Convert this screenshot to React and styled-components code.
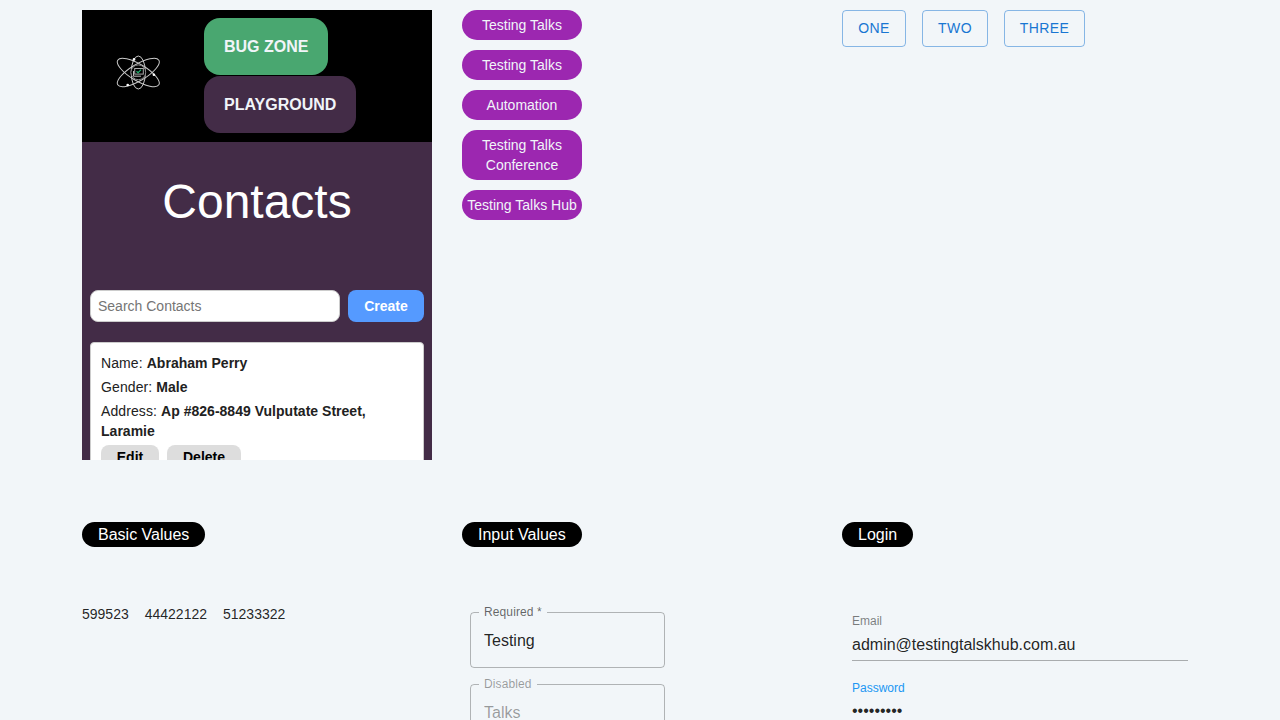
import React from "react";
import styled, { createGlobalStyle } from "styled-components";

const GlobalStyle = createGlobalStyle`
  *, *::before, *::after { box-sizing: border-box; }
  html, body { margin: 0; height: 100%; overflow: hidden; }
  body {
    background: #f2f6f9;
    color: rgba(0, 0, 0, 0.87);
    font-family: "Liberation Sans", Arial, sans-serif;
    font-size: 16px;
  }
  input, button { font-family: inherit; margin: 0; }
`;

const Page = styled.main`
  height: 720px;
  overflow: hidden;
  padding: 10px 0 0 82px;
`;

const Row = styled.section`
  display: grid;
  grid-template-columns: 380px 380px 350px;
  align-items: start;
  height: ${(p) => p.$height}px;
`;

const Phone = styled.div`
  width: 350px;
  height: 450px;
  overflow: hidden;
  background: #432c47;
`;

const PhoneHeader = styled.header`
  display: flex;
  height: 132px;
  padding-top: 8px;
  background: #000;
`;

const LogoBox = styled.div`
  width: 122px;
  padding: 36px 0 0 34px;
  svg { display: block; }
`;

const Nav = styled.nav`
  display: flex;
  flex-direction: column;
  align-items: flex-start;
  gap: 1px;
`;

const NavButton = styled.a`
  height: 57px;
  padding: 0 20px;
  border-radius: 16px;
  background: ${(p) => p.$color};
  color: #f1f5f9;
  font-weight: 700;
  line-height: 57px;
`;

const Title = styled.h1`
  margin: 0;
  height: 148px;
  padding-top: 32px;
  color: #fff;
  font-size: 48px;
  font-weight: 400;
  line-height: 56px;
  text-align: center;
`;

const SearchRow = styled.div`
  display: flex;
  gap: 8px;
  padding: 0 8px;
  margin-bottom: 20px;
`;

const SearchInput = styled.input`
  width: 250px;
  height: 32px;
  padding: 0 7px;
  border: 1px solid #ccc;
  border-radius: 8px;
  background: #fff;
  font-size: 14px;
  outline: none;
  &::placeholder { color: #757575; }
`;

const CreateButton = styled.button`
  width: 76px;
  height: 32px;
  padding: 0;
  border: 0;
  border-radius: 8px;
  background: #559aff;
  color: #fff;
  font-size: 14px;
  font-weight: 700;
`;

const Card = styled.article`
  height: 180px;
  margin: 0 8px;
  padding: 10px;
  border: 1px solid #ccc;
  border-radius: 4px;
  background: #fff;
`;

const Detail = styled.p`
  margin: 0 0 4px;
  color: #212121;
  font-size: 14px;
  line-height: 20px;
  letter-spacing: 0.1px;
  b { letter-spacing: 0.02px; }
`;

const CardActions = styled.div`
  display: flex;
  gap: 8px;
`;

const CardButton = styled.button`
  width: ${(p) => p.$width}px;
  height: 24px;
  padding: 0;
  border: 0;
  border-radius: 8px;
  background: #ddd;
  color: #000;
  font-size: 14px;
  font-weight: 700;
`;

const TagList = styled.div`
  display: flex;
  flex-direction: column;
  gap: 10px;
  width: 120px;
`;

const Tag = styled.span`
  padding: 5px 0;
  border-radius: 15px;
  background: #9c27b0;
  color: #f1f5f9;
  font-size: 14px;
  line-height: 20px;
  text-align: center;
`;

const ButtonGroup = styled.div`
  display: flex;
  gap: 16px;
`;

const OutlinedButton = styled.button`
  width: ${(p) => p.$width}px;
  height: 37px;
  padding: 0 0 2px;
  border: 1px solid rgba(25, 118, 210, 0.5);
  border-radius: 4px;
  background: transparent;
  color: #1976d2;
  font-size: 14px;
  letter-spacing: 0.4px;
`;

const Badge = styled.h2`
  width: fit-content;
  height: 25px;
  margin: 0;
  padding: 0 16px;
  border-radius: 13px;
  background: #000;
  color: #fff;
  font-size: 16px;
  font-weight: 400;
  line-height: 25px;
`;

const Values = styled.div`
  display: flex;
  gap: 16px;
  padding-top: 57px;
  font-size: 14px;
  line-height: 20px;
`;

const Fields = styled.form`
  display: flex;
  flex-direction: column;
  gap: 10px;
  padding: 59px 0 0 8px;
`;

const Fieldset = styled.fieldset`
  width: 195px;
  height: 62px;
  min-width: 0;
  margin: 0;
  padding: 0 8px;
  border: 1px solid rgba(0, 0, 0, 0.27);
  border-radius: 4px;
  color: rgba(0, 0, 0, ${(p) => (p.$muted ? 0.38 : 0.87)});
`;

const Legend = styled.legend`
  height: 13px;
  padding: 0 5px;
  color: rgba(0, 0, 0, ${(p) => (p.$muted ? 0.38 : 0.6)});
  font-size: 12px;
  line-height: 12px;
  letter-spacing: 0.11px;
`;

const TextInput = styled.input`
  display: block;
  width: 100%;
  height: 24px;
  padding: 0;
  border: 0;
  background: transparent;
  color: inherit;
  font-size: 16px;
  outline: none;
`;

const BoxedInput = styled(TextInput)`
  margin-top: 10px;
  padding-left: 5px;
`;

const PasswordInput = styled(TextInput)`
  height: 22px;
`;

const LoginForm = styled.form`
  display: flex;
  flex-direction: column;
  gap: 20px;
  width: 346px;
  padding: 67px 0 0 10px;
`;

const LineField = styled.label`
  height: 47px;
  border-bottom: 1px solid rgba(0, 0, 0, 0.3);
  color: rgba(0, 0, 0, 0.87);
`;

const LineLabel = styled.span`
  display: block;
  height: 19px;
  color: ${(p) => (p.$active ? "#2196f3" : "rgba(0, 0, 0, 0.5)")};
  font-size: 12px;
  line-height: 14px;
`;

function AtomLogo() {
  return (
    <svg width="45" height="38" viewBox="0 0 45 38" fill="none" stroke="#c8c8c8" strokeWidth="1">
      <ellipse cx="22.3" cy="18.5" rx="7.1" ry="16.5" />
      <ellipse cx="22.3" cy="18.5" rx="24" ry="8.2" transform="rotate(31 22.3 18.5)" />
      <ellipse cx="22.3" cy="18.5" rx="24" ry="8.2" transform="rotate(-31 22.3 18.5)" />
      <circle cx="22.3" cy="18.3" r="7.4" fill="#000" stroke="#888" strokeWidth="1" />
      <rect x="18.7" y="14.5" width="8.6" height="5.6" stroke="#aaa" />
      <path d="M17.5 17v5.2h7.5" stroke="#bbb" />
      <path d="M20.5 17.3l1.6 1.4 3-3" stroke="#20b570" strokeWidth="1.2" />
      <g fill="#fff" stroke="none">
        <circle cx="18" cy="5.4" r="1.3" />
        <circle cx="37.9" cy="20.8" r="1.3" />
        <circle cx="11.7" cy="31" r="1.3" />
      </g>
    </svg>
  );
}

const tags = ["Testing Talks", "Testing Talks", "Automation", "Testing Talks Conference", "Testing Talks Hub"];

export default function App() {
  return (
    <>
      <GlobalStyle />
      <Page>
        <Row $height={512}>
          <Phone>
            <PhoneHeader>
              <LogoBox><AtomLogo /></LogoBox>
              <Nav>
                <NavButton $color="#49a770">BUG ZONE</NavButton>
                <NavButton $color="#432c47">PLAYGROUND</NavButton>
              </Nav>
            </PhoneHeader>
            <Title>Contacts</Title>
            <SearchRow>
              <SearchInput placeholder="Search Contacts" />
              <CreateButton>Create</CreateButton>
            </SearchRow>
            <Card>
              <Detail>Name: <b>Abraham Perry</b></Detail>
              <Detail>Gender: <b>Male</b></Detail>
              <Detail>Address: <b>Ap #826-8849 Vulputate Street, Laramie</b></Detail>
              <CardActions>
                <CardButton $width={58}>Edit</CardButton>
                <CardButton $width={74}>Delete</CardButton>
              </CardActions>
            </Card>
          </Phone>
          <TagList>
            {tags.map((tag, i) => <Tag key={i}>{tag}</Tag>)}
          </TagList>
          <ButtonGroup>
            <OutlinedButton $width={64}>ONE</OutlinedButton>
            <OutlinedButton $width={66}>TWO</OutlinedButton>
            <OutlinedButton $width={81}>THREE</OutlinedButton>
          </ButtonGroup>
        </Row>
        <Row $height={240}>
          <div>
            <Badge>Basic Values</Badge>
            <Values>
              <span>599523</span>
              <span>44422122</span>
              <span>51233322</span>
            </Values>
          </div>
          <div>
            <Badge>Input Values</Badge>
            <Fields>
              <Fieldset>
                <Legend>Required *</Legend>
                <BoxedInput defaultValue="Testing" />
              </Fieldset>
              <Fieldset $muted>
                <Legend $muted>Disabled</Legend>
                <BoxedInput defaultValue="Talks" disabled />
              </Fieldset>
            </Fields>
          </div>
          <div>
            <Badge>Login</Badge>
            <LoginForm>
              <LineField>
                <LineLabel>Email</LineLabel>
                <TextInput defaultValue="admin@testingtalskhub.com.au" />
              </LineField>
              <LineField>
                <LineLabel $active>Password</LineLabel>
                <PasswordInput type="password" autoComplete="off" defaultValue="password1" />
              </LineField>
            </LoginForm>
          </div>
        </Row>
      </Page>
    </>
  );
}
